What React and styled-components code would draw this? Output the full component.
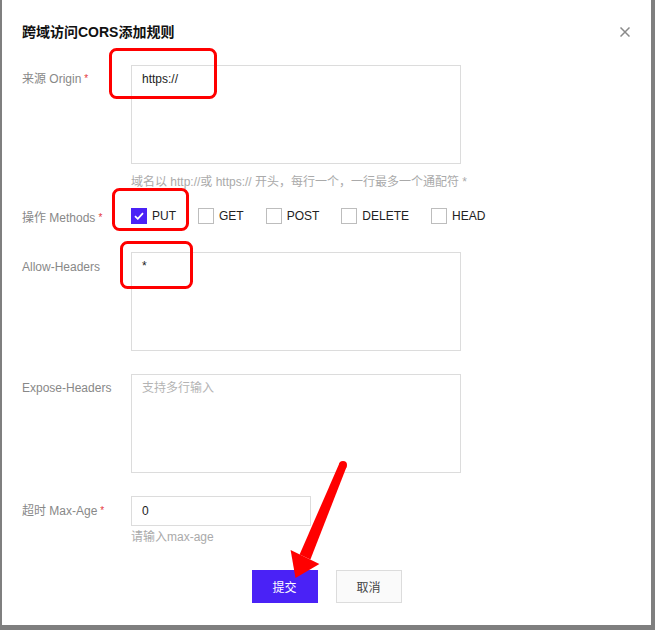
import React from "react";
import styled, { createGlobalStyle } from "styled-components";

const GlobalStyle = createGlobalStyle`
  html, body { margin: 0; padding: 0; }
  body {
    background: #7f7f7f;
    font-family: "Liberation Sans", "Noto Sans CJK SC", Arial, sans-serif;
    -webkit-font-smoothing: antialiased;
  }
`;

const Page = styled.div`
  position: relative;
  width: 655px;
  height: 630px;
  padding-left: 2px;
  box-sizing: border-box;
  overflow: hidden;
`;

const Dialog = styled.div`
  width: 649px;
  height: 625px;
  background: #fff;
  display: flex;
  flex-direction: column;
`;

const Header = styled.div`
  display: flex;
  align-items: center;
  justify-content: space-between;
  padding: 22px 21px 0 20px;
`;

const Title = styled.h2`
  margin: 0;
  font-size: 14px;
  line-height: 20px;
  font-weight: 700;
  color: #111;
`;

const Close = styled.button`
  width: 10px;
  height: 10px;
  padding: 0;
  border: 0;
  background: none;
  display: flex;
`;

const Form = styled.div`
  display: flex;
  flex-direction: column;
  padding-left: 20px;
  margin-top: 23px;
`;

const Row = styled.div`
  display: flex;
  align-items: flex-start;
  margin-top: ${(p) => p.$mt || 0}px;
`;

const Label = styled.div`
  width: 109px;
  flex-shrink: 0;
  font-size: 12px;
  line-height: 16px;
  color: #888;
  padding-top: ${(p) => p.$pt || 0}px;
`;

const Req = styled.span`
  color: #e5383b;
  font-size: 10px;
  margin-left: 3px;
  vertical-align: 1px;
`;

const Control = styled.div`
  display: flex;
  flex-direction: column;
`;

const TextArea = styled.div`
  width: 330px;
  height: 99px;
  box-sizing: border-box;
  border: 1px solid #dcdcdc;
  padding: 5px 10px;
  font-size: 12px;
  line-height: 16px;
  color: ${(p) => (p.$placeholder ? "#b4b4b4" : "#222")};
`;

const Input = styled.div`
  width: 180px;
  height: 30px;
  box-sizing: border-box;
  border: 1px solid #dcdcdc;
  padding: 6px 10px;
  font-size: 12px;
  line-height: 16px;
  color: #222;
`;

const Hint = styled.div`
  margin-top: ${(p) => p.$mt}px;
  font-size: 12px;
  line-height: 16px;
  color: #aaa;
  white-space: nowrap;
`;

const Methods = styled.div`
  display: flex;
  align-items: center;
  gap: 22px;
`;

const Method = styled.label`
  display: flex;
  align-items: center;
  gap: 5px;
  font-size: 12px;
  line-height: 16px;
  color: #222;
`;

const Box = styled.span`
  width: 16px;
  height: 16px;
  box-sizing: border-box;
  border: 1px solid ${(p) => (p.$checked ? "#4a22f6" : "#bdbdbd")};
  background: ${(p) => (p.$checked ? "#4a22f6" : "#fff")};
  display: flex;
  align-items: center;
  justify-content: center;
`;

const Footer = styled.div`
  display: flex;
  justify-content: center;
  gap: 18px;
  margin-top: 25px;
`;

const Button = styled.button`
  width: 66px;
  height: 33px;
  box-sizing: border-box;
  font-family: inherit;
  font-size: 12px;
  border: 1px solid ${(p) => (p.$primary ? "#4a22f6" : "#dcdcdc")};
  background: ${(p) => (p.$primary ? "#4a22f6" : "#fafafa")};
  color: ${(p) => (p.$primary ? "#fff" : "#444")};
  padding: 0;
`;

const Overlay = styled.svg`
  position: absolute;
  left: 0;
  top: 0;
  pointer-events: none;
`;

const Check = () => (
  <svg width="10" height="8" viewBox="0 0 10 8">
    <path d="M1 4.2 L3.8 6.8 L9 1.2" fill="none" stroke="#fff" strokeWidth="1.8" />
  </svg>
);

const methods = [
  { name: "PUT", checked: true },
  { name: "GET" },
  { name: "POST" },
  { name: "DELETE" },
  { name: "HEAD" },
];

export default function App() {
  return (
    <>
      <GlobalStyle />
      <Page>
        <Dialog>
          <Header>
            <Title>跨域访问CORS添加规则</Title>
            <Close aria-label="close">
              <svg width="10" height="10" viewBox="0 0 10 10">
                <path d="M0.5 0.5 L9.5 9.5 M9.5 0.5 L0.5 9.5" stroke="#8a8a8a" strokeWidth="1.5" />
              </svg>
            </Close>
          </Header>
          <Form>
            <Row>
              <Label $pt={6}>
                来源 Origin<Req>*</Req>
              </Label>
              <Control>
                <TextArea>https://</TextArea>
                <Hint $mt={10}>域名以 http://或 https:// 开头，每行一个，一行最多一个通配符 *</Hint>
              </Control>
            </Row>
            <Row $mt={18}>
              <Label $pt={2}>
                操作 Methods<Req>*</Req>
              </Label>
              <Methods>
                {methods.map((m) => (
                  <Method key={m.name}>
                    <Box $checked={m.checked}>{m.checked && <Check />}</Box>
                    {m.name}
                  </Method>
                ))}
              </Methods>
            </Row>
            <Row $mt={26}>
              <Label $pt={7}>Allow-Headers</Label>
              <TextArea>*</TextArea>
            </Row>
            <Row $mt={23}>
              <Label $pt={6}>Expose-Headers</Label>
              <TextArea $placeholder>支持多行输入</TextArea>
            </Row>
            <Row $mt={23}>
              <Label $pt={7}>
                超时 Max-Age<Req>*</Req>
              </Label>
              <Control>
                <Input>0</Input>
                <Hint $mt={3}>请输入max-age</Hint>
              </Control>
            </Row>
          </Form>
          <Footer>
            <Button $primary>提交</Button>
            <Button>取消</Button>
          </Footer>
        </Dialog>
        <Overlay width="655" height="630" viewBox="0 0 655 630">
          <g fill="none" stroke="#ff0000" strokeWidth="3">
            <rect x="110.5" y="49.5" width="105" height="48" rx="6" />
            <rect x="113.5" y="189.5" width="74" height="40" rx="6" />
            <rect x="121.5" y="242.5" width="70" height="45" rx="6" />
          </g>
          <g fill="#ff0000">
            <circle cx="343" cy="465" r="4" />
            <polygon points="339.4,463.3 346.6,466.7 310.4,559.6 299.6,554.4" />
            <polygon points="290.6,550 319.4,563.9 295.5,578" />
          </g>
        </Overlay>
      </Page>
    </>
  );
}
